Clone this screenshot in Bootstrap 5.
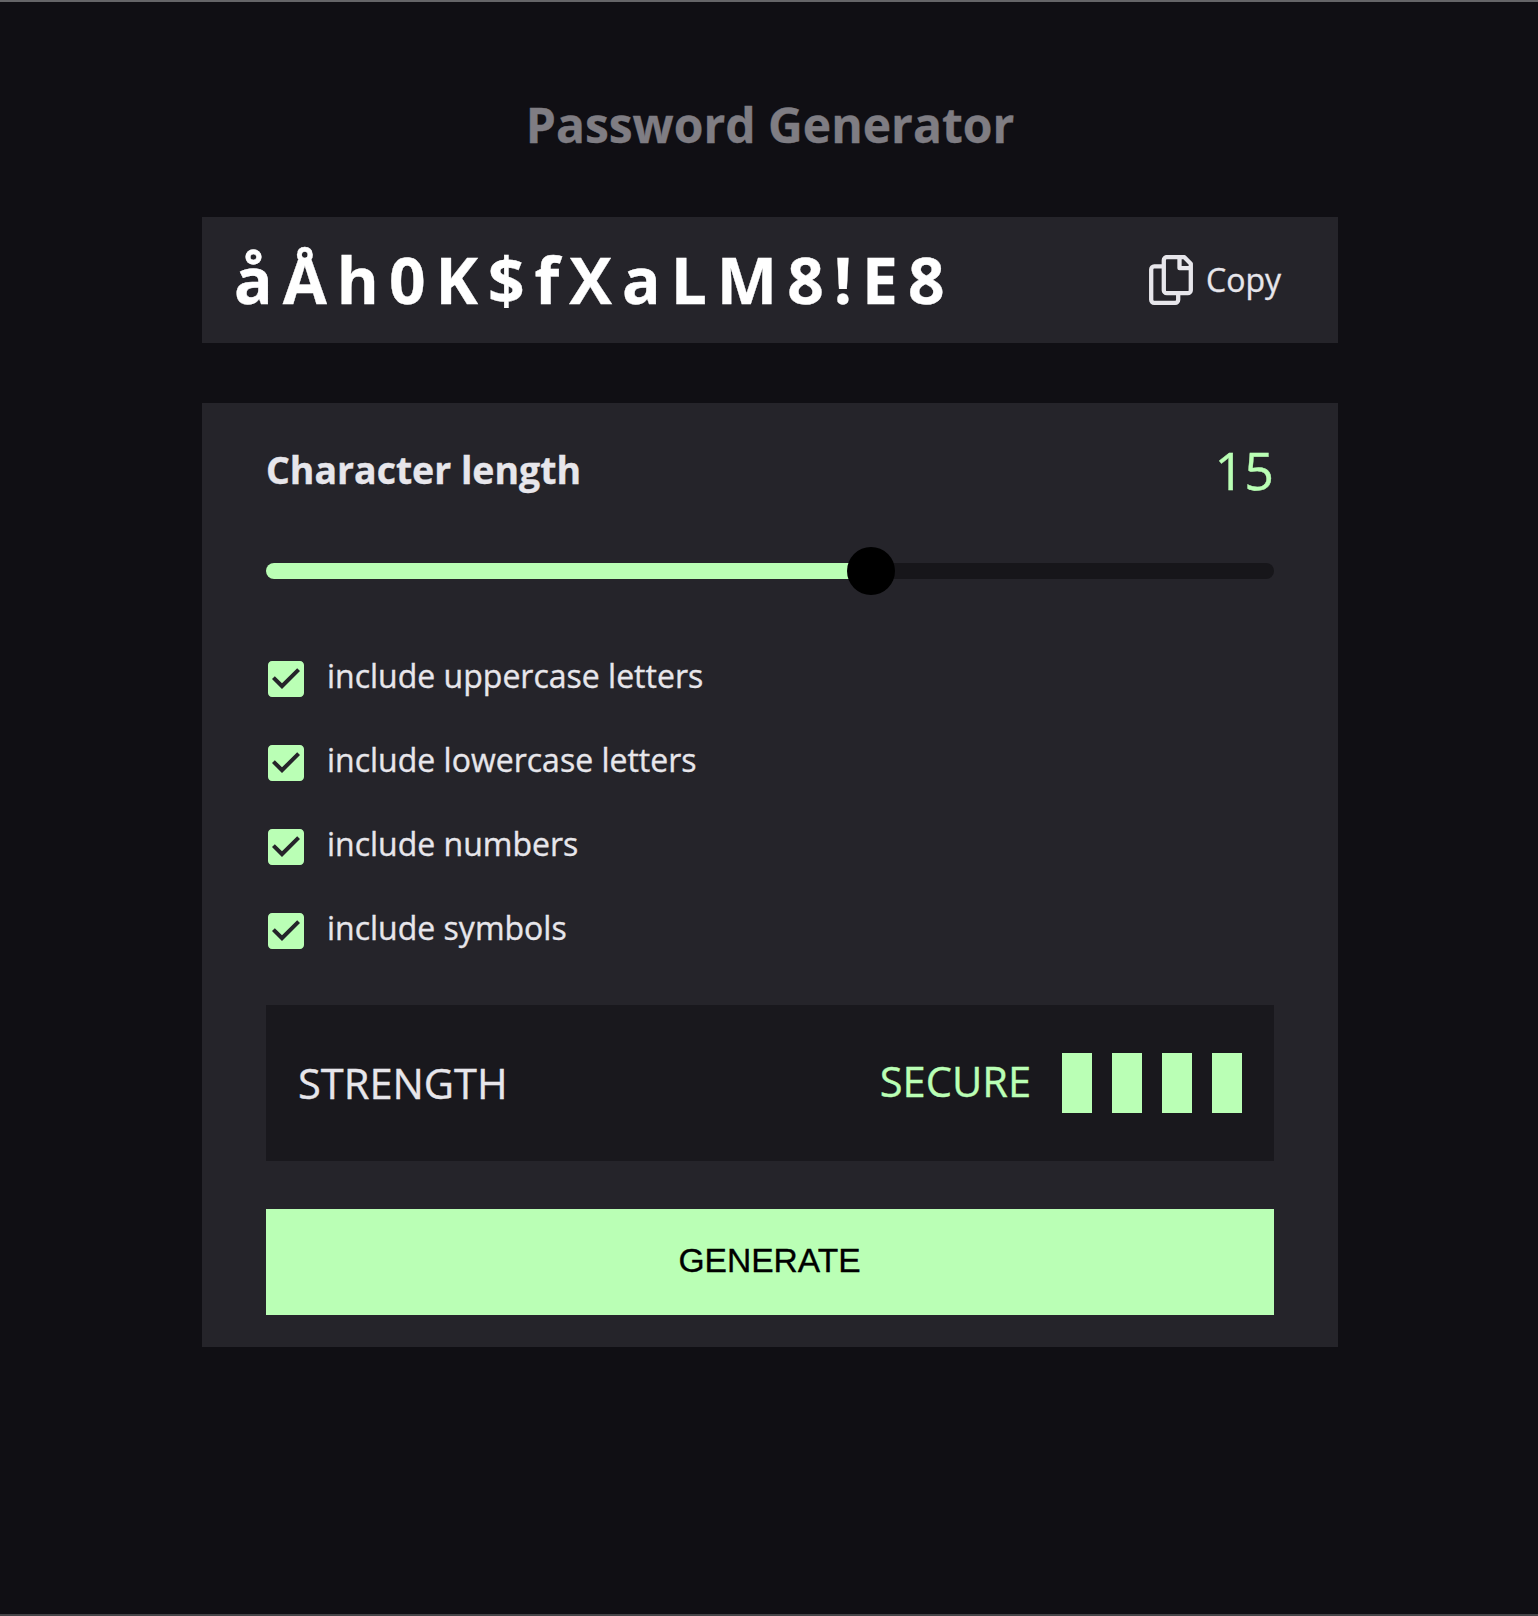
<!DOCTYPE html>
<html lang="en">
<head>
<meta charset="utf-8">
<meta name="viewport" content="width=device-width, initial-scale=1">
<title>Password Generator</title>
<link rel="stylesheet" href="https://cdn.jsdelivr.net/npm/bootstrap@5.3.0/dist/css/bootstrap.min.css">
<style>
  :root { --page: #100f14; --panel: #25242a; --inset: #19181d; --track: #17161a; --mint: #baffb5; --ink: #e7e6eb; }
  body {
    min-height: 1616px; padding: 87px 0 0 2px;
    background: var(--page); color: var(--ink);
    border-top: 2px solid #656568; border-bottom: 2px solid #454448;
    font-family: "Open Sans", sans-serif; font-size: 32px; line-height: 44px;
    -webkit-text-stroke: .35px currentColor;
  }
  .generator { width: 1136px; }
  .title-text { font-size: 48px; line-height: 72px; margin-bottom: 56px; color: #7f7d83; }
  .panel { background: var(--panel); }
  .password-panel { height: 126px; padding: 0 57px 0 32px; margin-bottom: 60px; }
  .password-text { font-size: 64px; line-height: 86px; letter-spacing: 10px; }
  .copy-button { gap: 13px; color: var(--ink); }
  .settings-panel { padding: 31px 64px 32px; }
  .length-row { height: 71px; margin-bottom: 42px; }
  .length-label { font-size: 37.44px; }
  .length-value { font-size: 52px; line-height: 71px; color: var(--mint); }
  .mint-text { color: var(--mint); }
  .slider-box { height: 48px; margin-bottom: 42px; }
  .slider-track { height: 16px; background: var(--track); border-radius: 8px; overflow: hidden; }
  .slider-fill { height: 100%; background: var(--mint); }
  .slider-thumb { width: 48px; height: 48px; background: #000; }
  .option-row { height: 84px; padding-left: 2px; gap: 23px; }
  .option-row span { padding-bottom: 6px; }
  .strength-panel { height: 156px; padding: 0 32px; margin: 32px 0 48px; background: var(--inset); font-size: 41.6px; line-height: 58px; }
  .strength-level { padding-bottom: 4px; margin-right: 31px; }
  .bars { gap: 20px; }
  .bars i { width: 30px; height: 60px; background: var(--mint); }
  .generate-button { height: 106px; padding: 0 1px 2px 0; background: var(--mint); color: #000; font: 33.6px/40px "Liberation Sans", Arial, sans-serif; }
</style>
</head>
<body>
<main class="generator mx-auto">
  <h1 class="title-text text-center fw-bold">Password Generator</h1>

  <section class="panel password-panel d-flex align-items-center justify-content-between">
    <div class="password-text fw-bold text-white">åÅh0K$fXaLM8!E8</div>
    <button type="button" class="copy-button d-flex align-items-center border-0 bg-transparent p-0">
      <svg width="44" height="50" viewBox="0 0 44 50" fill="none" stroke="currentColor" stroke-width="4.3" stroke-linejoin="round" aria-hidden="true">
        <path d="M17 2.2H35.4L41.8 8.8V35.2a3 3 0 0 1-3 3H17.8a3 3 0 0 1-3-3V5.2a3 3 0 0 1 3-3z"/>
        <path d="M30.5 2.2V13.2H41.8"/>
        <path d="M14.8 11.4H5.2a3 3 0 0 0-3 3V44.8a3 3 0 0 0 3 3H26.2a3 3 0 0 0 3-3V38.2"/>
      </svg>
      <span>Copy</span>
    </button>
  </section>

  <section class="panel settings-panel">
    <div class="length-row d-flex align-items-center justify-content-between">
      <span class="length-label fw-bold">Character length</span>
      <span class="length-value">15</span>
    </div>
    <div class="slider-box position-relative d-flex align-items-center" role="slider" aria-valuenow="15" aria-valuemin="0" aria-valuemax="25" aria-label="Character length">
      <div class="slider-track w-100"><div class="slider-fill" style="width:60%"></div></div>
      <div class="slider-thumb rounded-circle position-absolute top-50 translate-middle" style="left:60%"></div>
    </div>

    <div class="option-row d-flex align-items-center">
      <svg width="36" height="36" viewBox="3 3 18 18" fill="#baffb5" aria-hidden="true"><path d="M19 3H5c-1.11 0-2 .9-2 2v14c0 1.1.89 2 2 2h14c1.11 0 2-.9 2-2V5c0-1.1-.89-2-2-2zm-9 14l-5-5 1.41-1.41L10 14.17l7.59-7.59L19 8l-9 9z"/></svg>
      <span>include uppercase letters</span>
    </div>
    <div class="option-row d-flex align-items-center">
      <svg width="36" height="36" viewBox="3 3 18 18" fill="#baffb5" aria-hidden="true"><path d="M19 3H5c-1.11 0-2 .9-2 2v14c0 1.1.89 2 2 2h14c1.11 0 2-.9 2-2V5c0-1.1-.89-2-2-2zm-9 14l-5-5 1.41-1.41L10 14.17l7.59-7.59L19 8l-9 9z"/></svg>
      <span>include lowercase letters</span>
    </div>
    <div class="option-row d-flex align-items-center">
      <svg width="36" height="36" viewBox="3 3 18 18" fill="#baffb5" aria-hidden="true"><path d="M19 3H5c-1.11 0-2 .9-2 2v14c0 1.1.89 2 2 2h14c1.11 0 2-.9 2-2V5c0-1.1-.89-2-2-2zm-9 14l-5-5 1.41-1.41L10 14.17l7.59-7.59L19 8l-9 9z"/></svg>
      <span>include numbers</span>
    </div>
    <div class="option-row d-flex align-items-center">
      <svg width="36" height="36" viewBox="3 3 18 18" fill="#baffb5" aria-hidden="true"><path d="M19 3H5c-1.11 0-2 .9-2 2v14c0 1.1.89 2 2 2h14c1.11 0 2-.9 2-2V5c0-1.1-.89-2-2-2zm-9 14l-5-5 1.41-1.41L10 14.17l7.59-7.59L19 8l-9 9z"/></svg>
      <span>include symbols</span>
    </div>

    <div class="strength-panel d-flex align-items-center">
      <span class="me-auto">STRENGTH</span>
      <span class="strength-level mint-text">SECURE</span>
      <div class="bars d-flex"><i></i><i></i><i></i><i></i></div>
    </div>
    <button type="button" class="generate-button btn rounded-0 border-0 w-100 d-block">GENERATE</button>
  </section>
</main>
<script src="https://cdn.jsdelivr.net/npm/bootstrap@5.3.0/dist/js/bootstrap.bundle.min.js"></script>
</body>
</html>
